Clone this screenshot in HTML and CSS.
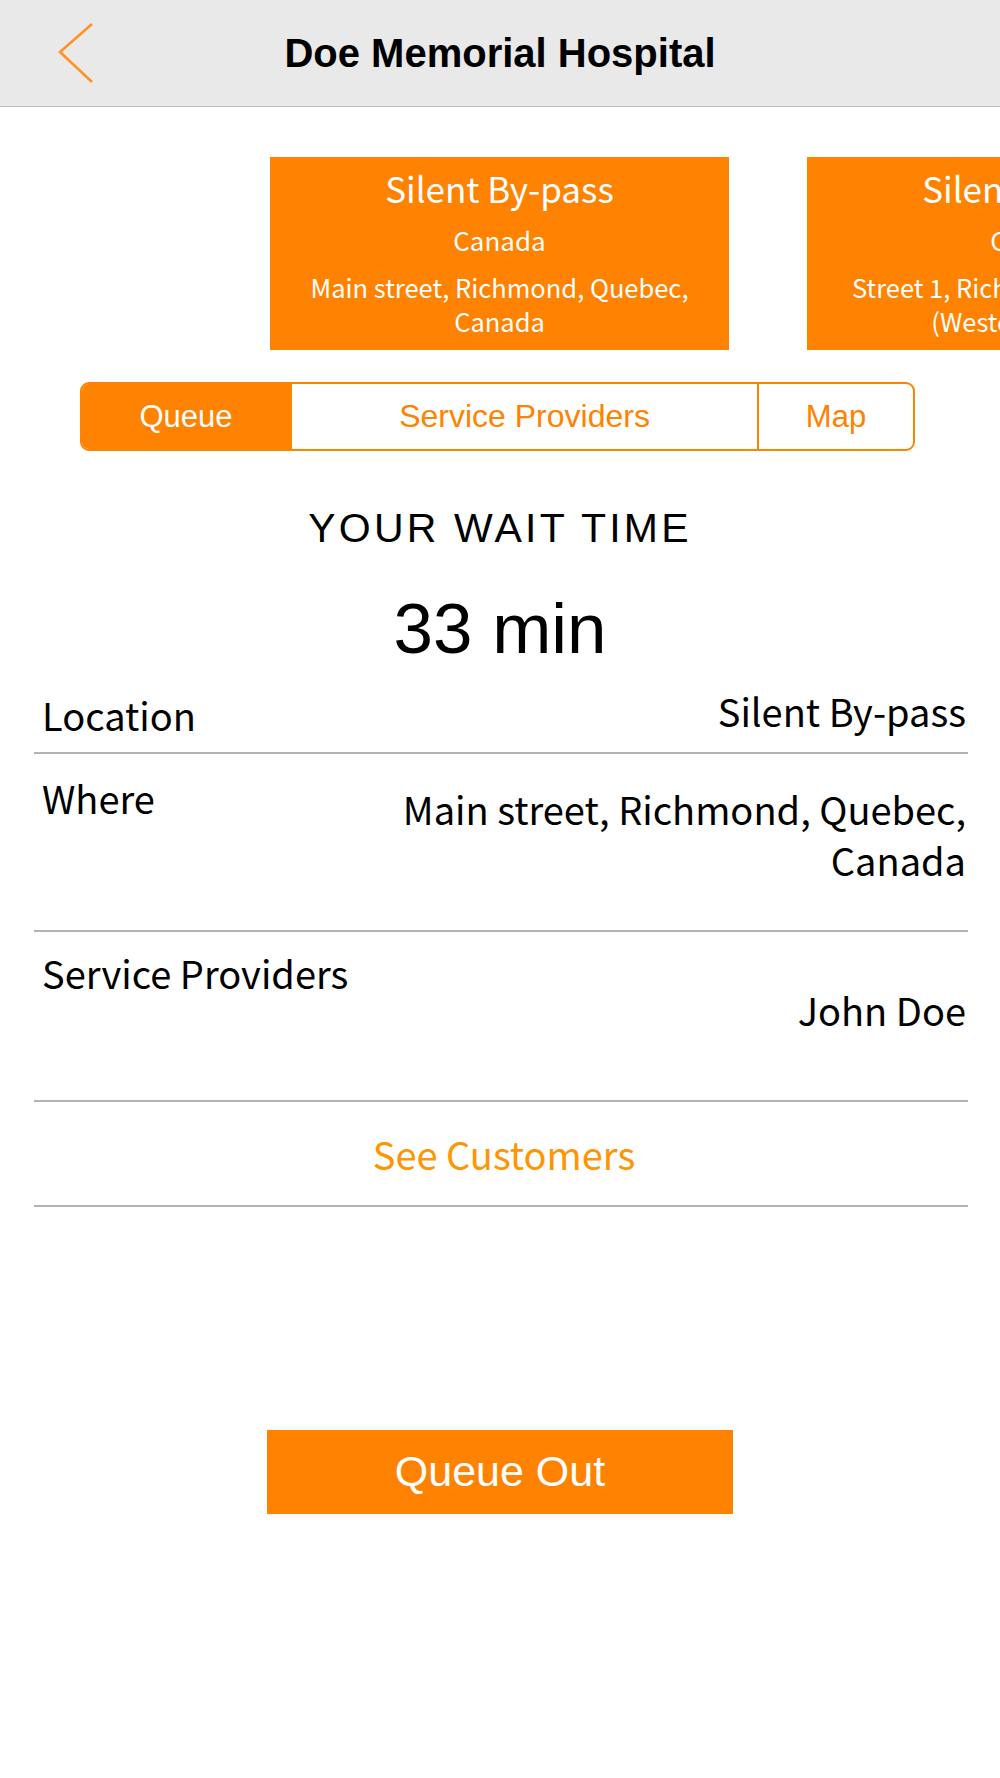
FILE: index.html
```html
<!DOCTYPE html>
<html lang="en">
<head>
    <meta charset="UTF-8">
    <meta name="viewport" content="width=device-width, initial-scale=1.0">
    <title>Doe Memorial Hospital</title>
    <link rel="stylesheet" href="styles.css">
</head>
<body>
    <header class="topbar">
        <a class="back" href="#">
            <svg width="36" height="62" viewBox="0 0 36 62"><polyline points="34,2 2,30 34,60" fill="none" stroke="#ff9225" stroke-width="2.6"/></svg>
        </a>
        <h1 class="title">Doe Memorial Hospital</h1>
        <span></span>
    </header>

    <div class="carousel">
        <div class="card">
            <div class="card-name">Silent By-pass</div>
            <div class="card-country">Canada</div>
            <div class="card-address">Main street, Richmond, Quebec,<br>Canada</div>
        </div>
        <div class="card">
            <div class="card-name">Silent By-pass</div>
            <div class="card-country">Canada</div>
            <div class="card-address">Street 1, Richmond, Vancouver,<br>(Western Canada)</div>
        </div>
    </div>

    <nav class="segments">
        <a class="seg seg-queue active" href="#">Queue</a>
        <a class="seg seg-providers" href="#">Service Providers</a>
        <a class="seg seg-map" href="#">Map</a>
    </nav>

    <div class="wait-label">YOUR WAIT TIME</div>
    <div class="wait-value">33 min</div>

    <div class="details">
        <div class="row row-location">
            <span class="label">Location</span>
            <span class="value">Silent By-pass</span>
        </div>
        <div class="row row-where">
            <span class="label">Where</span>
            <span class="value">Main street, Richmond, Quebec,<br>Canada</span>
        </div>
        <div class="row row-providers">
            <span class="label">Service Providers</span>
            <span class="value">John Doe</span>
        </div>
        <a class="row row-link" href="#">See Customers</a>
    </div>

    <button class="queue-out">Queue Out</button>
</body>
</html>
```

FILE: styles.css
```css
body {
    margin: 0;
    background-color: #ffffff;
    color: #000000;
    font-family: "Liberation Sans", Arial, sans-serif;
}

.topbar {
    display: grid;
    grid-template-columns: 1fr auto 1fr;
    align-items: center;
    height: 106px;
    background-color: #e9e9e9;
    border-bottom: 1px solid #bdbdbd;
}
.back {
    display: flex;
    padding-left: 58px;
}
.title {
    margin: 0;
    font-size: 40px;
    font-weight: 700;
}

.carousel {
    display: flex;
    gap: 78px;
    padding: 50px 0 0 270px;
    overflow: hidden;
}
.card {
    flex: 0 0 459px;
    height: 193px;
    box-sizing: border-box;
    padding-top: 11px;
    background-color: #ff8200;
    color: #ffffff;
    text-align: center;
    font-family: "Noto Sans CJK KR", "Noto Sans", sans-serif;
    white-space: nowrap;
}
.card-name {
    font-size: 35px;
    line-height: 40px;
}
.card-country {
    margin-top: 15px;
    font-size: 26px;
    line-height: 34px;
}
.card-address {
    margin-top: 13px;
    font-size: 25.5px;
    line-height: 34px;
}

.segments {
    display: flex;
    width: 835px;
    height: 69px;
    box-sizing: border-box;
    margin: 32px 0 0 80px;
    border: 2px solid #ff8200;
    border-radius: 9px;
    overflow: hidden;
}
.seg {
    display: flex;
    align-items: center;
    justify-content: center;
    color: #ff8200;
    font-size: 31px;
    text-decoration: none;
}
.seg + .seg {
    border-left: 2px solid #ff8200;
}
.seg.active {
    background-color: #ff8200;
    color: #ffffff;
}
.seg-queue { width: 208px; }
.seg-providers { width: 465px; font-size: 32px; }
.seg-map { flex: 1; }

.wait-label {
    margin-top: 53px;
    text-align: center;
    font-size: 41px;
    line-height: 48px;
    letter-spacing: 3.2px;
}
.wait-value {
    margin-top: 37px;
    text-align: center;
    font-size: 71px;
    line-height: 80px;
}

.details {
    margin: 17px 32px 0 34px;
    font-family: "Noto Sans CJK KR", "Noto Sans", sans-serif;
    font-size: 38px;
    line-height: 50px;
}
.row {
    display: flex;
    justify-content: space-between;
    align-items: flex-start;
    padding: 0 2px 0 8px;
    border-bottom: 2px solid #b3b3b3;
}
.value {
    text-align: right;
}
.row-location { height: 66px; }
.row-location .label { padding-top: 4px; }
.row-where { height: 176px; }
.row-where .label { padding-top: 19px; }
.row-where .value { padding-top: 29px; line-height: 51px; }
.row-providers { height: 168px; }
.row-providers .label { padding-top: 16px; }
.row-providers .value { padding-top: 53px; }
.row-link {
    height: 103px;
    align-items: center;
    justify-content: center;
    color: #ff9500;
    text-decoration: none;
}

.queue-out {
    display: block;
    width: 466px;
    height: 84px;
    margin: 223px auto 0;
    padding: 0 0 2px;
    border: none;
    background-color: #ff8200;
    color: #ffffff;
    font-family: "Liberation Sans", Arial, sans-serif;
    font-size: 43px;
}
```
